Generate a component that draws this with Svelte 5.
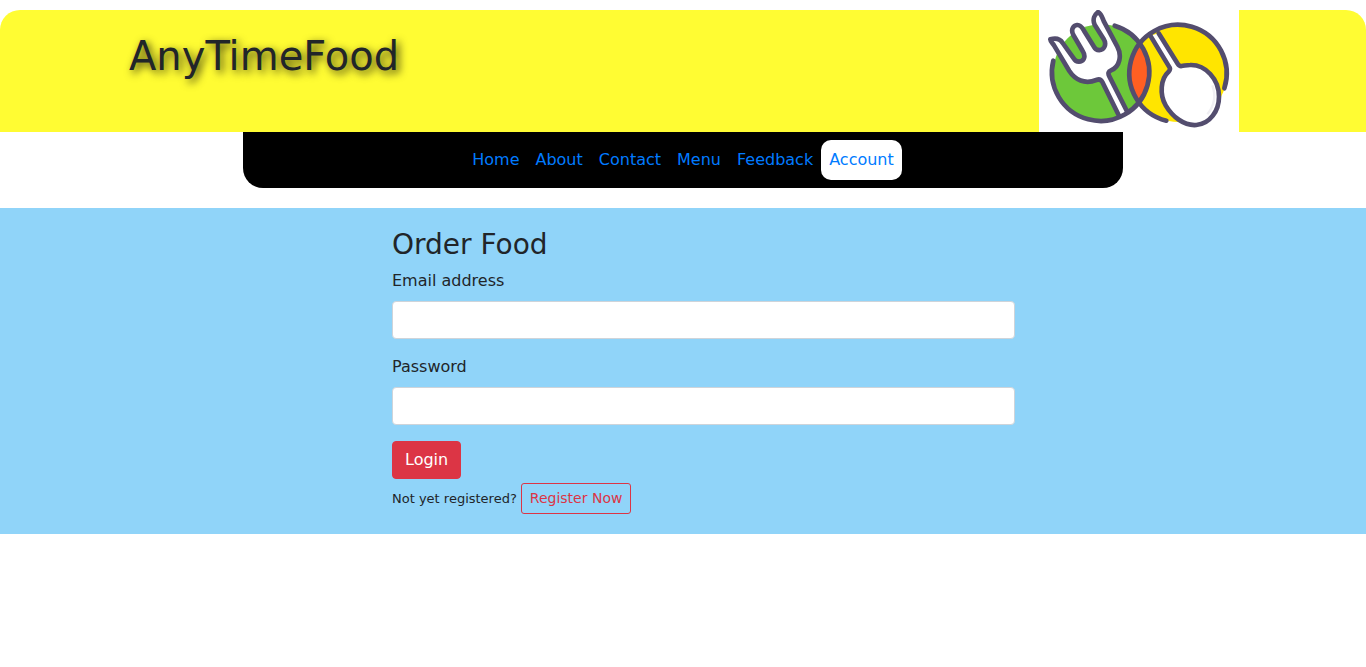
<script>
  const links = ['Home', 'About', 'Contact', 'Menu', 'Feedback', 'Account'];
  let current = $state('Account');
  let email = $state('');
  let password = $state('');
</script>

<header>
  <h1>AnyTimeFood</h1>
  <svg class="logo" viewBox="27 30 600 366" role="img" aria-label="Fork and spoon">
    <defs>
      <clipPath id="lens"><circle cx="214" cy="217" r="146" /></clipPath>
    </defs>
    <rect x="27" y="30" width="600" height="366" fill="#fff" />
    <circle cx="214" cy="217" r="144" fill="#6dc83a" />
    <circle cx="445" cy="220" r="146" fill="#ffe500" />
    <circle cx="445" cy="220" r="146" fill="#ff5f22" clip-path="url(#lens)" />
    <g stroke="#534d6e" stroke-width="14" stroke-linecap="round" stroke-linejoin="round">
      <path fill="#fff" d="M267 347 L217 246 Q211 235 199 240 C164 254 135 239 118 213 L72 136 C67 129 60 122 61 118 C75 114 90 116 98 129 L131 175 C139 189 155 187 161 177 C166 168 163 161 158 153 L130 105 C121 88 131 76 141 75 C151 74 157 83 162 92 L191 139 C199 154 216 154 223 141 C227 133 226 125 221 117 L194 74 C186 57 195 43 204 36 C215 42 217 54 222 65 L262 140 C276 166 270 200 243 211 Q231 216 238 229 L292 336" />
      <path fill="none" d="M254 77 A146 146 0 1 1 70 182" />
      <path fill="#fff" d="M361 107 L419 203 Q422 209 415 216 C392 236 388 284 407 316 C427 350 462 378 499 375 C540 372 567 332 567 290 C567 237 526 193 480 195 C470 195 464 197 455 198 Q448 199 443 191 L386 100" />
      <path fill="none" d="M409 362 A146 146 0 1 1 583 265" />
    </g>
    <path d="M547 256 Q564 303 532 343" fill="none" stroke="#f0eff3" stroke-width="7" />
  </svg>
</header>

<nav aria-label="Main">
  {#each links as link}
    <a
      href={'#' + link.toLowerCase()}
      class:active={current === link}
      aria-current={current === link ? 'page' : undefined}
      onclick={() => (current = link)}>{link}</a>
  {/each}
</nav>

<main>
  <form onsubmit={(event) => event.preventDefault()}>
    <h2>Order Food</h2>
    <div class="field">
      <label for="email">Email address</label>
      <input id="email" type="email" bind:value={email} />
    </div>
    <div class="field">
      <label for="password">Password</label>
      <input id="password" type="password" bind:value={password} />
    </div>
    <button class="login" type="submit">Login</button>
    <div class="register">
      <small>Not yet registered?</small>
      <a href="#register">Register Now</a>
    </div>
  </form>
</main>

<style>
  :global(body) {
    margin: 0;
    background: #fff;
    color: #212529;
    font: 16px/24px Verdana, 'DejaVu Sans', sans-serif;
  }

  header {
    display: flex;
    justify-content: space-between;
    margin-top: 10px;
    padding: 0 127px 0 129px;
    border-radius: 20px 20px 0 0;
    background: #fffc33;
  }

  h1 {
    margin: 22px 0 0;
    font-size: 40px;
    font-weight: 400;
    line-height: 48px;
    text-shadow: 3px 3px 8px #000c;
  }

  .logo {
    display: block;
    width: 200px;
    height: 122px;
  }

  nav {
    display: flex;
    flex-wrap: wrap;
    justify-content: center;
    box-sizing: border-box;
    max-width: 880px;
    margin: 0 auto 20px;
    padding: 8px;
    border-radius: 0 0 20px 20px;
    background: #000;
  }

  nav a {
    padding: 8px;
    border-radius: 10px;
    color: #007bff;
    text-decoration: none;
  }

  nav a.active {
    background: #fff;
  }

  main {
    padding: 20px 24px;
    background: #90d4f9;
  }

  form {
    box-sizing: border-box;
    max-width: 664px;
    margin: 0 auto;
    padding-left: 41px;
  }

  h2 {
    margin: 0 0 8px;
    font-size: 28px;
    font-weight: 400;
    line-height: 33px;
  }

  .field {
    display: flex;
    flex-direction: column;
    gap: 8px;
    margin-bottom: 16px;
  }

  input {
    box-sizing: border-box;
    width: 100%;
    height: 38px;
    padding: 6px 12px;
    border: 1px solid #ced4da;
    border-radius: 4px;
    background: #fff;
    color: #495057;
    font: inherit;
  }

  .login {
    padding: 6px 12px;
    border: 1px solid #dc3545;
    border-radius: 4px;
    background: #dc3545;
    color: #fff;
    font: inherit;
    cursor: pointer;
  }

  .register {
    display: flex;
    align-items: baseline;
    gap: 4px;
    margin-top: 4px;
  }

  small {
    font-size: 13px;
  }

  .register a {
    padding: 4px 8px;
    border: 1px solid #dc3545;
    border-radius: 3px;
    color: #dc3545;
    font-size: 14px;
    line-height: 21px;
    text-decoration: none;
  }
</style>
